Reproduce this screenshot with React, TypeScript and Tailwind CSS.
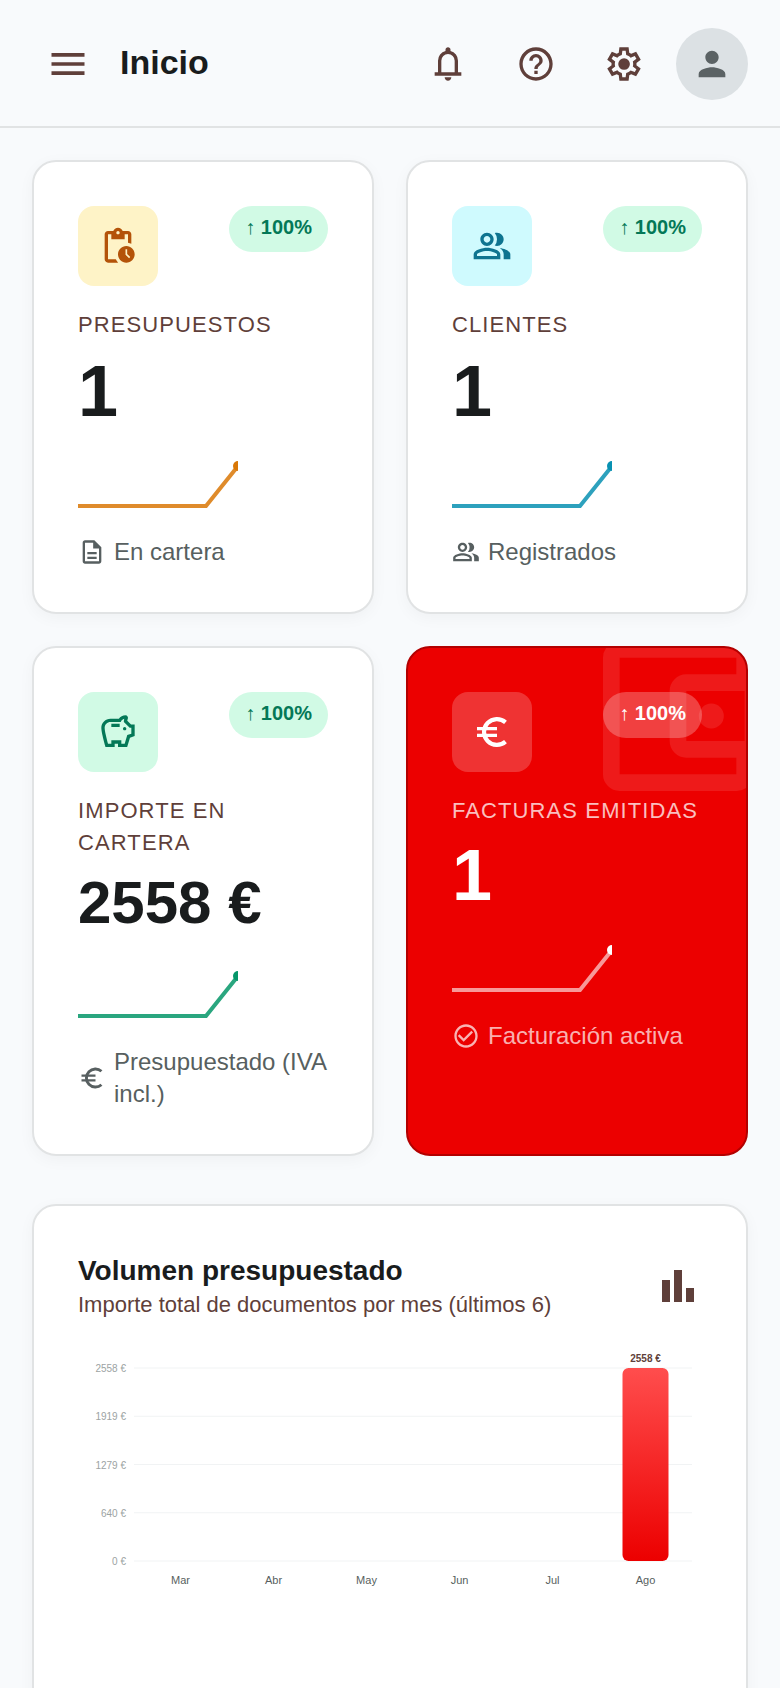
import React from 'react';
import {
  MdBarChart,
  MdCheckCircleOutline,
  MdHelpOutline,
  MdMenu,
  MdOutlineDescription,
  MdOutlinePendingActions,
  MdOutlinePeopleAlt,
  MdOutlineSavings,
  MdPerson,
} from 'react-icons/md';

const BellIcon = () => <svg viewBox="0 0 24 24" className="size-10" fill="currentColor" aria-hidden="true">
  <path d="M4 19v-2h2v-7q0-2.075 1.25-3.687T10.5 4.2v-.7q0-.625.438-1.062T12 2t1.063.438T13.5 3.5v.7q2 .5 3.25 2.113T18 10v7h2v2zm8 3q-.825 0-1.412-.587T10 20h4q0 .825-.587 1.413T12 22m-4-5h8v-7q0-1.65-1.175-2.825T12 6T9.175 7.175T8 10z" />
</svg>;

const GearIcon = () => <svg viewBox="0 0 24 24" className="size-10" fill="currentColor" aria-hidden="true">
  <path d="m9.25 22l-.4-3.2q-.325-.125-.612-.3t-.563-.375L4.7 19.375l-2.75-4.75l2.575-1.95Q4.5 12.5 4.5 12.338v-.675q0-.163.025-.338L1.95 9.375l2.75-4.75l2.975 1.25q.275-.2.575-.375t.6-.3l.4-3.2h5.5l.4 3.2q.325.125.613.3t.562.375l2.975-1.25l2.75 4.75l-2.575 1.95q.025.175.025.338v.674q0 .163-.05.338l2.575 1.95l-2.75 4.75l-2.95-1.25q-.275.2-.575.375t-.6.3l-.4 3.2zm1.75-2h1.975l.35-2.65q.775-.2 1.438-.587t1.212-.938l2.475 1.025l.975-1.7l-2.15-1.625q.125-.35.175-.737T17.5 12t-.05-.787t-.175-.738l2.15-1.625l-.975-1.7l-2.475 1.05q-.55-.575-1.212-.962t-1.438-.588L13 4h-1.975l-.35 2.65q-.775.2-1.437.588t-1.213.937L5.55 7.15l-.975 1.7l2.15 1.6q-.125.375-.175.75t-.05.8q0 .4.05.775t.175.75l-2.15 1.625l.975 1.7l2.475-1.05q.55.575 1.213.963t1.437.587zm1.05-4.5q1.45 0 2.475-1.025T15.55 12t-1.025-2.475T12.05 8.5q-1.475 0-2.487 1.025T8.55 12t1.013 2.475T12.05 15.5" />
</svg>;

const EuroIcon = () => <svg viewBox="0 0 24 24" className="size-[1em]" fill="none" stroke="currentColor" aria-hidden="true">
  <path d="M20.1 6.2A7.75 7.75 0 1 0 20.1 17.8" strokeWidth="2.5" />
  <path d="M3 10h12M3 14h12" strokeWidth="2" />
</svg>;

const WalletMark = () => <svg viewBox="0 0 24 24" className="absolute -top-8 -right-8 size-[200px] text-white/10" fill="currentColor" aria-hidden="true">
  <path d="M5 21q-.825 0-1.413-.587T3 19V5q0-.825.588-1.413T5 3h14q.825 0 1.413.588T21 5v2.5h-2V5H5v14h14v-2.5h2V19q0 .825-.587 1.413T19 21H5Zm8-4q-.825 0-1.413-.587T11 15V9q0-.825.588-1.413T13 7h7q.825 0 1.413.588T22 9v6q0 .825-.587 1.413T20 17h-7Zm7-2V9h-7v6h7Zm-4-1.5q.625 0 1.063-.438T17.5 12q0-.625-.438-1.063T16 10.5q-.625 0-1.063.438T14.5 12q0 .625.438 1.063T16 13.5Z" />
</svg>;

type Kpi = {
  label: string;
  value: string;
  valueClass: string;
  note: string;
  icon: React.ReactNode;
  noteIcon: React.ReactNode;
  iconClass: string;
  lineClass: string;
  featured?: boolean;
};

const kpis: Kpi[] = [
  {
    label: 'Presupuestos',
    value: '1',
    valueClass: 'mt-[10px] mb-[25px] text-[72px] leading-[80px]',
    note: 'En cartera',
    icon: <MdOutlinePendingActions />,
    noteIcon: <MdOutlineDescription />,
    iconClass: 'bg-[#fef3c7] text-[#b45309]',
    lineClass: 'text-[#d97706]',
  },
  {
    label: 'Clientes',
    value: '1',
    valueClass: 'mt-[10px] mb-[25px] text-[72px] leading-[80px]',
    note: 'Registrados',
    icon: <MdOutlinePeopleAlt />,
    noteIcon: <MdOutlinePeopleAlt />,
    iconClass: 'bg-[#cffafe] text-[#0e7490]',
    lineClass: 'text-[#0891b2]',
  },
  {
    label: 'Importe en cartera',
    value: '2558 €',
    valueClass: 'mt-2 mb-[27px] text-[60px] leading-[72px]',
    note: 'Presupuestado (IVA incl.)',
    icon: <MdOutlineSavings />,
    noteIcon: <EuroIcon />,
    iconClass: 'bg-[#d1fae5] text-[#047857]',
    lineClass: 'text-[#059669]',
  },
  {
    label: 'Facturas emitidas',
    value: '1',
    valueClass: 'mt-2 mb-[25px] text-[72px] leading-[80px]',
    note: 'Facturación activa',
    icon: <EuroIcon />,
    noteIcon: <MdCheckCircleOutline />,
    iconClass: 'bg-white/20 text-white',
    lineClass: 'text-white',
    featured: true,
  },
];

function Sparkline({ kpi }: { kpi: Kpi }) {
  return <svg viewBox="0 0 160 60" className={`h-[60px] w-40 overflow-hidden ${kpi.lineClass}`} aria-hidden="true">
    <polyline points="0,50 128,50 160,10" fill="none" stroke="currentColor" strokeWidth="4" opacity={kpi.featured ? 0.6 : 0.85} />
    <circle cx="160" cy="10" r="5" fill="currentColor" />
  </svg>;
}

function KpiCard({ kpi }: { kpi: Kpi }) {
  const dark = kpi.featured;
  return <article className={`relative overflow-hidden rounded-3xl border-2 p-11 ${dark ? 'border-[#b30000] bg-[#ec0000]' : 'border-[#e1e3e4] bg-white shadow-[0_4px_16px_rgba(0,0,0,0.04)]'}`}>
    {dark && <WalletMark />}
    <div className="relative flex items-start justify-between">
      <div className={`flex size-20 items-center justify-center rounded-2xl text-[40px] ${kpi.iconClass}`}>{kpi.icon}</div>
      <span className={`rounded-full px-4 pt-[9px] pb-[13px] text-xl leading-6 font-bold whitespace-nowrap ${dark ? 'bg-white/25 text-white' : 'bg-[#d1fae5] text-[#047857]'}`}><span className="font-normal">↑</span> 100%</span>
    </div>
    <h2 className={`mt-[23px] text-[22px] leading-8 tracking-wider uppercase ${dark ? 'text-white/75' : 'text-[#5f3f3a]'}`}>{kpi.label}</h2>
    <p className={`font-bold ${kpi.valueClass} ${dark ? 'text-white' : 'text-[#191c1d]'}`}>{kpi.value}</p>
    <Sparkline kpi={kpi} />
    <p className={`mt-5 flex items-center gap-2 text-2xl leading-8 ${dark ? 'text-white/70' : 'text-[#575f60]'}`}>
      <span className="shrink-0 text-[28px]">{kpi.noteIcon}</span>{kpi.note}
    </p>
  </article>;
}

const months = [
  { name: 'Mar', total: 0 },
  { name: 'Abr', total: 0 },
  { name: 'May', total: 0 },
  { name: 'Jun', total: 0 },
  { name: 'Jul', total: 0 },
  { name: 'Ago', total: 2558 },
];
const MAX = 2558;
const TOP = 22;
const PLOT = 193;
const STEP = 93;

function VolumeChart() {
  return <svg viewBox="0 0 624 250" className="mt-6 w-full" role="img" aria-label="Volumen presupuestado por mes">
    <defs>
      <linearGradient id="bar" x1="0" y1="0" x2="0" y2="1">
        <stop offset="0" stopColor="#ff4d4d" />
        <stop offset="1" stopColor="#ec0000" />
      </linearGradient>
    </defs>
    {[1, 0.75, 0.5, 0.25, 0].map((part) => {
      const y = TOP + PLOT * (1 - part);
      return <g key={part}>
        <line x1="56" x2="614" y1={y} y2={y} stroke="#f1f3f4" />
        <text x="48" y={y + 4} textAnchor="end" fontSize="10" fill="#9ca3a3">{Math.round(MAX * part)} €</text>
      </g>;
    })}
    {months.map((month, i) => {
      const x = 56 + STEP * (i + 0.5);
      const height = (month.total / MAX) * PLOT;
      return <g key={month.name} textAnchor="middle">
        {month.total > 0 && <>
          <rect x={x - 23} y={TOP + PLOT - height} width="46" height={height} rx="6" fill="url(#bar)" />
          <text x={x} y={TOP + PLOT - height - 6} fontSize="10" fontWeight="700" fill="#5f3f3a">{month.total} €</text>
        </>}
        <text x={x} y={TOP + PLOT + 23} fontSize="11" fill="#575f60">{month.name}</text>
      </g>;
    })}
  </svg>;
}

export default function App() {
  const action = 'flex size-[72px] items-center justify-center rounded-full text-[#5f3f3a]';
  return <div className="flex h-screen flex-col bg-[#f8fafc] font-['Liberation_Sans',Arial,sans-serif] text-[#191c1d]">
    <header className="flex shrink-0 items-center gap-4 border-b-2 border-[#e1e3e4] px-8 pt-7 pb-[26px]">
      <button type="button" aria-label="Menú" className={action}><MdMenu className="size-11" /></button>
      <h1 className="mr-auto pb-1 text-[34px] leading-10 font-bold">Inicio</h1>
      <button type="button" aria-label="Notificaciones" className={action}><BellIcon /></button>
      <button type="button" aria-label="Ayuda" className={action}><MdHelpOutline className="size-10" /></button>
      <button type="button" aria-label="Ajustes" className={action}><GearIcon /></button>
      <button type="button" aria-label="Perfil" className="flex size-[72px] items-center justify-center rounded-full bg-[#dce1e4] text-[#5b6264]"><MdPerson className="size-10" /></button>
    </header>

    <main className="min-h-0 flex-1 overflow-y-auto p-8 [scrollbar-width:none]">
      <section className="grid grid-cols-2 gap-8">
        {kpis.map((kpi) => <KpiCard key={kpi.label} kpi={kpi} />)}
      </section>

      <section className="mt-12 min-h-[560px] rounded-3xl border-2 border-[#e1e3e4] bg-white p-11 shadow-[0_4px_16px_rgba(0,0,0,0.04)]">
        <div className="flex items-center justify-between">
          <div className="pb-1">
            <h2 className="text-[28px] leading-[42px] font-bold">Volumen presupuestado</h2>
            <p className="text-[22px] leading-[26px] text-[#5f3f3a]">Importe total de documentos por mes (últimos 6)</p>
          </div>
          <MdBarChart className="size-12 text-[#5f3f3a]" />
        </div>
        <VolumeChart />
      </section>
    </main>
  </div>;
}
